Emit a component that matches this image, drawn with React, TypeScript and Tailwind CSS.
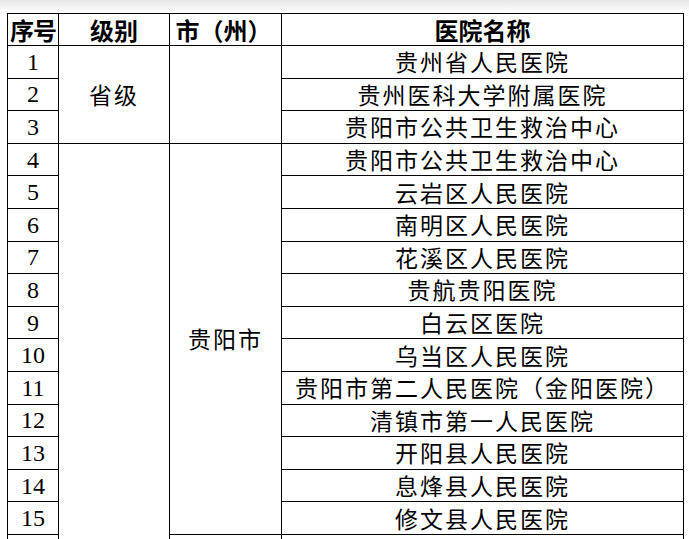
import React from "react"

const hospitals = [
  "贵州省人民医院",
  "贵州医科大学附属医院",
  "贵阳市公共卫生救治中心",
  "贵阳市公共卫生救治中心",
  "云岩区人民医院",
  "南明区人民医院",
  "花溪区人民医院",
  "贵航贵阳医院",
  "白云区医院",
  "乌当区人民医院",
  "贵阳市第二人民医院（金阳医院）",
  "清镇市第一人民医院",
  "开阳县人民医院",
  "息烽县人民医院",
  "修文县人民医院",
]

const cjk = "font-['Noto_Sans_CJK_SC',sans-serif]"
const cell = "border border-black p-0 text-center align-middle"
const body = `${cjk} text-[23px] tracking-[2px] leading-none`

export default function App() {
  return (
    <div className="min-h-screen bg-white text-black">
      <div className="h-[13px] bg-gradient-to-b from-[#e6e6e6] to-white" />
      <div className="pl-[7px]">
        <table className="w-[676px] table-fixed border-collapse">
          <colgroup>
            <col className="w-[51px]" />
            <col className="w-[111px]" />
            <col className="w-[112px]" />
            <col className="w-[402px]" />
          </colgroup>
          <thead>
            <tr className={`h-[32px] text-[24px] leading-none font-bold ${cjk}`}>
              <th className={`${cell} tracking-[-1px]`}>序号</th>
              <th className={cell}>级别</th>
              <th className={`${cell} pr-1`}>市（州）</th>
              <th className={cell}>医院名称</th>
            </tr>
          </thead>
          <tbody>
            {hospitals.map((name, i) => (
              <tr key={i} className="h-[32.6px]">
                <td className={`${cell} font-['Liberation_Serif',serif] text-[24px] leading-none`}>{i + 1}</td>
                {i === 0 && (
                  <td rowSpan={3} className={`${cell} ${body}`}>
                    省级
                  </td>
                )}
                {i === 3 && <td rowSpan={13} className={cell} />}
                {i === 0 && <td rowSpan={3} className={cell} />}
                {i === 3 && (
                  <td rowSpan={12} className={`${cell} ${body}`}>
                    贵阳市
                  </td>
                )}
                <td className={`${cell} ${body} whitespace-nowrap`}>{name}</td>
              </tr>
            ))}
            <tr className="h-[32.6px]">
              <td className={cell} />
              <td className={cell} />
              <td className={cell} />
            </tr>
          </tbody>
        </table>
      </div>
    </div>
  )
}
